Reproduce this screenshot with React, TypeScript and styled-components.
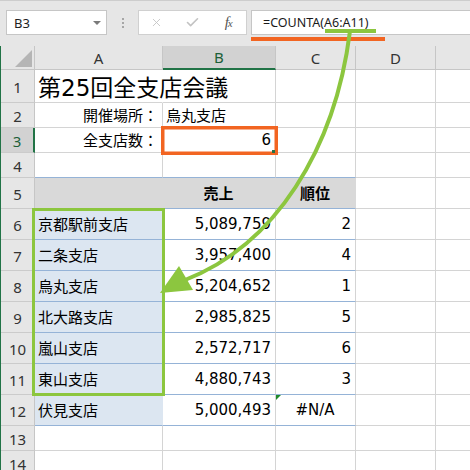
import React from 'react'
import styled, { createGlobalStyle } from 'styled-components'
import { X, Check } from 'lucide-react'

type Align = 'left' | 'right' | 'center'

type CellData = {
  text?: string
  align?: Align
  fill?: string
  blue?: boolean
  bold?: boolean
  title?: boolean
  overflow?: boolean
  error?: boolean
}

type RowData = { height: number; cells: CellData[] }

const GREEN = '#8cc63f'
const ORANGE = '#f26522'
const EXCEL_GREEN = '#217346'
const BLUE_FILL = '#dce6f1'
const GRAY_FILL = '#d9d9d9'

const COLUMN_WIDTHS = [128, 113, 80, 80, 80]
const COLUMN_NAMES = ['A', 'B', 'C', 'D', 'E']

const branches = [
  ['京都駅前支店', '5,089,759', '2'],
  ['二条支店', '3,957,400', '4'],
  ['烏丸支店', '5,204,652', '1'],
  ['北大路支店', '2,985,825', '5'],
  ['嵐山支店', '2,572,717', '6'],
  ['東山支店', '4,880,743', '3'],
  ['伏見支店', '5,000,493', '#N/A'],
]

const empty = (n: number, blue = false): CellData[] => Array.from({ length: n }, () => ({ blue }))

const rows: RowData[] = [
  { height: 33, cells: [{ text: '第25回全支店会議', title: true, overflow: true }, ...empty(4)] },
  { height: 25, cells: [{ text: '開催場所：', align: 'right' }, { text: '烏丸支店' }, ...empty(3)] },
  { height: 25, cells: [{ text: '全支店数：', align: 'right' }, { text: '6', align: 'right' }, ...empty(3)] },
  { height: 25, cells: [...empty(3, true), ...empty(2)] },
  {
    height: 31,
    cells: [
      { fill: GRAY_FILL, blue: true },
      { text: '売上', align: 'center', bold: true, fill: GRAY_FILL, blue: true },
      { text: '順位', align: 'center', bold: true, fill: GRAY_FILL, blue: true },
      ...empty(2),
    ],
  },
  ...branches.map(([name, sales, rank]): RowData => ({
    height: 31,
    cells: [
      { text: name, fill: BLUE_FILL, blue: true },
      { text: sales, align: 'right', blue: true },
      rank === '#N/A'
        ? { text: rank, align: 'center', blue: true, error: true }
        : { text: rank, align: 'right', blue: true },
      ...empty(2),
    ],
  })),
  { height: 25, cells: empty(5) },
  { height: 25, cells: empty(5) },
]

const GlobalStyle = createGlobalStyle`
  html, body {
    margin: 0;
    padding: 0;
    background: #fff;
  }
  body {
    font-family: "DejaVu Sans", "Noto Sans CJK JP", sans-serif;
  }
`

const Frame = styled.div`
  position: relative;
  width: 470px;
  height: 470px;
  overflow: hidden;
  background: #fff;
`

const Toolbar = styled.div`
  display: flex;
  align-items: flex-start;
  height: 46px;
  box-sizing: border-box;
  padding: 9px 0 0 6px;
  background: #e6e6e6;
  border-top: 1px solid #cdcdcd;
`

const NameBox = styled.div`
  display: flex;
  align-items: center;
  justify-content: space-between;
  width: 101px;
  height: 25px;
  box-sizing: border-box;
  padding: 0 5px 0 7px;
  background: #fff;
  border: 1px solid #c6c6c6;
  font: 13px "Noto Sans", sans-serif;
  color: #222;
`

const DropArrow = styled.span`
  width: 0;
  height: 0;
  border-left: 4px solid transparent;
  border-right: 4px solid transparent;
  border-top: 4px solid #7a7a7a;
`

const Grip = styled.div`
  display: flex;
  flex-direction: column;
  align-items: center;
  justify-content: center;
  gap: 2px;
  width: 31px;
  height: 25px;

  span {
    width: 2px;
    height: 2px;
    background: #a6a6a6;
  }
`

const ButtonBox = styled.div`
  display: flex;
  align-items: center;
  width: 109px;
  height: 25px;
  box-sizing: border-box;
  background: #fff;
  border: 1px solid #d0d0d0;
`

const IconSlot = styled.div`
  display: flex;
  align-items: center;
  justify-content: center;
  width: 36px;
  height: 100%;
  color: #c3c3c3;
`

const Fx = styled.span`
  font: italic 15px "Liberation Serif", serif;
  color: #555;
  letter-spacing: -1px;

  sub {
    font-size: 11px;
    vertical-align: 0;
  }
`

const FormulaBox = styled.div`
  display: flex;
  align-items: center;
  flex: 1;
  height: 25px;
  margin-left: 4px;
  box-sizing: border-box;
  padding-left: 11px;
  background: #fff;
  border: 1px solid #c6c6c6;
  border-right: none;
  font: 12.5px "Noto Sans", sans-serif;
  color: #1a1a1a;
`

const Sheet = styled.div<{ $rows: string }>`
  display: grid;
  grid-template-columns: 34px ${COLUMN_WIDTHS.map(w => `${w}px`).join(' ')};
  grid-template-rows: 24px ${p => p.$rows};
  border-left: 1px solid ${EXCEL_GREEN};
`

const Corner = styled.div`
  display: flex;
  align-items: flex-end;
  justify-content: flex-end;
  padding: 0 2px 2px 0;
  background: #e6e6e6;
  border-right: 1px solid #c6c6c6;
  border-bottom: 1px solid #c6c6c6;

  span {
    width: 0;
    height: 0;
    border-left: 17px solid transparent;
    border-bottom: 17px solid #b5b5b5;
  }
`

const ColumnHeader = styled.div<{ $selected?: boolean }>`
  display: flex;
  align-items: center;
  justify-content: center;
  box-sizing: border-box;
  background: ${p => (p.$selected ? '#d2d2d2' : '#e6e6e6')};
  border-right: 1px solid #c6c6c6;
  border-bottom: ${p => (p.$selected ? `2px solid ${EXCEL_GREEN}` : '1px solid #c6c6c6')};
  color: ${p => (p.$selected ? '#1d5f38' : '#333')};
  font: 15px "Noto Sans", sans-serif;
`

const RowHeader = styled.div<{ $selected?: boolean }>`
  display: flex;
  align-items: center;
  justify-content: center;
  box-sizing: border-box;
  padding-top: 2px;
  background: ${p => (p.$selected ? '#d2d2d2' : '#e6e6e6')};
  border-right: ${p => (p.$selected ? `2px solid ${EXCEL_GREEN}` : '1px solid #c6c6c6')};
  border-bottom: 1px solid #cbcbcb;
  color: ${p => (p.$selected ? '#1d5f38' : '#333')};
  font: 15px "Noto Sans", sans-serif;
  line-height: 20px;
`

const Cell = styled.div<{
  $align?: Align
  $fill?: string
  $blue?: boolean
  $bold?: boolean
  $title?: boolean
  $overflow?: boolean
  $error?: boolean
}>`
  position: relative;
  z-index: ${p => (p.$overflow ? 1 : 0)};
  display: flex;
  align-items: center;
  justify-content: ${p => (p.$align === 'right' ? 'flex-end' : p.$align === 'center' ? 'center' : 'flex-start')};
  min-width: 0;
  box-sizing: border-box;
  padding: 0 4px 1px 3px;
  background: ${p => p.$fill ?? 'transparent'};
  border-right: 1px solid ${p => p.$fill ?? (p.$overflow ? 'transparent' : '#d4d4d4')};
  border-bottom: 1px solid ${p => (p.$blue ? '#95b3d7' : p.$fill ?? '#d4d4d4')};
  font-size: ${p => (p.$title ? '23px' : '15px')};
  font-weight: ${p => (p.$bold ? 700 : 400)};
  color: #000;
  white-space: nowrap;
  overflow: ${p => (p.$overflow ? 'visible' : 'hidden')};

  &::before {
    content: '';
    display: ${p => (p.$error ? 'block' : 'none')};
    position: absolute;
    top: 0;
    left: 0;
    width: 0;
    height: 0;
    border-top: 5px solid #1f8a2a;
    border-right: 5px solid transparent;
  }
`

const Overlay = styled.svg`
  position: absolute;
  top: 0;
  left: 0;
  width: 470px;
  height: 470px;
  pointer-events: none;
`

const App = () => {
  return (
    <Frame>
      <GlobalStyle />
      <Toolbar>
        <NameBox>
          B3
          <DropArrow />
        </NameBox>
        <Grip>
          <span />
          <span />
          <span />
        </Grip>
        <ButtonBox>
          <IconSlot>
            <X size={13} strokeWidth={1.6} />
          </IconSlot>
          <IconSlot>
            <Check size={15} strokeWidth={2.6} />
          </IconSlot>
          <IconSlot>
            <Fx>
              f<sub>x</sub>
            </Fx>
          </IconSlot>
        </ButtonBox>
        <FormulaBox>=COUNTA(A6:A11)</FormulaBox>
      </Toolbar>

      <Sheet $rows={rows.map(r => `${r.height}px`).join(' ')}>
        <Corner>
          <span />
        </Corner>
        {COLUMN_NAMES.map(name => (
          <ColumnHeader key={name} $selected={name === 'B'}>
            {name === 'E' ? '' : name}
          </ColumnHeader>
        ))}
        {rows.map((row, r) => (
          <React.Fragment key={r}>
            <RowHeader $selected={r === 2}>{r + 1}</RowHeader>
            {row.cells.map((c, i) => (
              <Cell
                key={i}
                $align={c.align}
                $fill={c.fill}
                $blue={c.blue}
                $bold={c.bold}
                $title={c.title}
                $overflow={c.overflow}
                $error={c.error}
              >
                {c.text}
              </Cell>
            ))}
          </React.Fragment>
        ))}
      </Sheet>

      <Overlay viewBox="0 0 470 470">
        <rect x={251} y={37} width={134} height={4} fill={ORANGE} />
        <rect x={325} y={29} width={51} height={4} fill={GREEN} />
        <rect x={162.75} y={127.75} width={113.5} height={25.5} fill="none" stroke={ORANGE} strokeWidth={3.5} />
        <rect x={272} y={150} width={3} height={3} fill={EXCEL_GREEN} />
        <rect x={33.5} y={209.5} width={130} height={185} fill="none" stroke={GREEN} strokeWidth={3} />
        <path d="M350 31 C 335 150, 275 245, 185 280" fill="none" stroke={GREEN} strokeWidth={4} />
        <polygon points="160,293 179,266 193,290" fill={GREEN} />
      </Overlay>
    </Frame>
  )
}

export default App
